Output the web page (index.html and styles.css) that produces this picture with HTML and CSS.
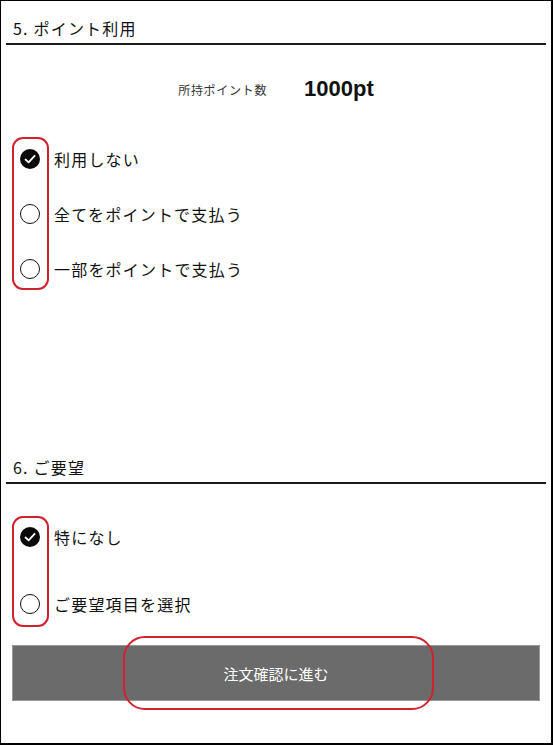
FILE: index.html
```html
<!DOCTYPE html>
<html lang="ja">
<head>
<meta charset="utf-8">
<link rel="stylesheet" href="styles.css">
</head>
<body>
<div class="page">
  <div class="sec-head">5. ポイント利用</div>
  <div class="points">
    <span class="points-label">所持ポイント数</span>
    <span class="points-value">1000pt</span>
  </div>
  <div class="radios radios-1">
    <div class="row">
      <span class="radio checked"><svg viewBox="0 0 20 20" width="20" height="20"><polyline points="5.5,10.5 8.6,13.4 14.6,6.8" fill="none" stroke="#fff" stroke-width="1.8" stroke-linecap="round" stroke-linejoin="round"/></svg></span>
      <span class="label">利用しない</span>
    </div>
    <div class="row">
      <span class="radio"></span>
      <span class="label">全てをポイントで支払う</span>
    </div>
    <div class="row">
      <span class="radio"></span>
      <span class="label">一部をポイントで支払う</span>
    </div>
  </div>
  <div class="sec-head sec-head-2">6. ご要望</div>
  <div class="radios radios-2">
    <div class="row">
      <span class="radio checked"><svg viewBox="0 0 20 20" width="20" height="20"><polyline points="5.5,10.5 8.6,13.4 14.6,6.8" fill="none" stroke="#fff" stroke-width="1.8" stroke-linecap="round" stroke-linejoin="round"/></svg></span>
      <span class="label">特になし</span>
    </div>
    <div class="row">
      <span class="radio"></span>
      <span class="label">ご要望項目を選択</span>
    </div>
  </div>
  <button class="submit">注文確認に進む</button>

  <div class="mark mark-1"></div>
  <div class="mark mark-2"></div>
  <div class="mark mark-3"></div>
</div>
</body>
</html>
```

FILE: styles.css
```css
html, body {
  margin: 0;
  padding: 0;
  background: #fff;
}
body {
  font-family: "Noto Sans CJK JP", "Noto Sans", sans-serif;
  color: #111;
}
.page {
  position: relative;
  box-sizing: border-box;
  width: 553px;
  height: 745px;
  border-top: 1px solid #000;
  border-left: 1px solid #000;
  border-right: 2px solid #000;
  border-bottom: 2px solid #000;
  overflow: hidden;
}
.sec-head {
  margin: 0 5px 0 5px;
  padding: 15px 7px 3px;
  font-size: 16px;
  line-height: 24px;
  letter-spacing: 1.2px;
  border-bottom: 2px solid #1a1a1a;
}
.points {
  margin-top: 32px;
  display: flex;
  justify-content: center;
  align-items: center;
  gap: 37px;
  height: 24px;
}
.points-label {
  font-size: 12px;
  letter-spacing: 0.7px;
  color: #333;
}
.points-value {
  font-family: "Liberation Sans", Arial, sans-serif;
  font-weight: bold;
  font-size: 22px;
  color: #111;
}
.radios-1 {
  margin-top: 30px;
}
.radios-1 .row {
  height: 55px;
}
.sec-head-2 {
  margin-top: 144px;
}
.radios-2 {
  margin-top: 19px;
}
.radios-2 .row {
  height: 67px;
}
.row {
  display: flex;
  align-items: center;
  padding-left: 19px;
  gap: 14px;
}
.radio {
  box-sizing: border-box;
  width: 20px;
  height: 20px;
  border-radius: 50%;
  border: 1.5px solid #111;
  display: flex;
  align-items: center;
  justify-content: center;
  flex: none;
}
.radio.checked {
  background: #0a0a0a;
  border: none;
}
.label {
  font-size: 16px;
  line-height: 22px;
  letter-spacing: 1.2px;
  color: #111;
}
.submit {
  display: block;
  box-sizing: border-box;
  margin: 8px 11px 0;
  width: 528px;
  height: 56px;
  background: #6b6b6b;
  border: 1px solid #999;
  color: #fff;
  font-family: "Noto Sans CJK JP", "Noto Sans", sans-serif;
  font-size: 15px;
  padding: 0;
}
.mark {
  position: absolute;
  box-sizing: border-box;
  border: 2.5px solid #d2212e;
}
.mark-1 {
  left: 11px;
  top: 136px;
  width: 37px;
  height: 153px;
  border-radius: 11px;
}
.mark-2 {
  left: 11px;
  top: 515px;
  width: 37px;
  height: 111px;
  border-radius: 11px;
}
.mark-3 {
  left: 122px;
  top: 635px;
  width: 311px;
  height: 74px;
  border-radius: 22px;
}
```
